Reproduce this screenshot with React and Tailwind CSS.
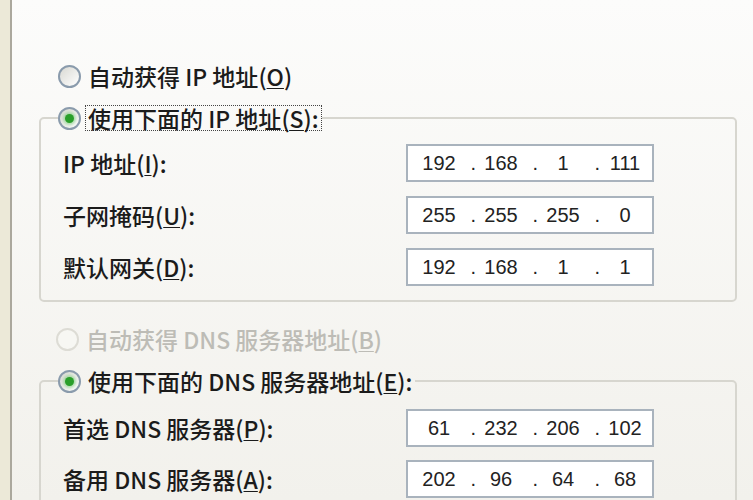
import { Fragment } from "react";
import clsx from "clsx";

const Radio = ({ checked, disabled }) => (
    <span
        className={clsx(
            "flex h-[23px] w-[23px] shrink-0 items-center justify-center rounded-full border-2",
            disabled
                ? "border-[#dddcd5] bg-[#f7f7f3]"
                : "border-[#8a9bac] bg-linear-to-br from-[#d9d9d3] to-[#ffffff]"
        )}
    >
        {checked && (
            <span className="h-[9px] w-[9px] rounded-full bg-[#2a9f2a] shadow-[0_0_3px_2px_rgba(110,200,110,0.55)]" />
        )}
    </span>
);

// label text with the access key underlined
const Label = ({ before, keyChar, after = "" }) => (
    <>
        {before}(<span className="underline decoration-1 underline-offset-2">{keyChar}</span>){after}
    </>
);

const RadioRow = ({ checked, disabled, focused, children }) => (
    <div className="flex h-[26px] items-center gap-[4px]">
        <Radio checked={checked} disabled={disabled} />
        <span
            className={clsx(
                "border px-[2px] leading-[24px] whitespace-pre",
                focused ? "border-dotted border-[#444]" : "border-transparent",
                disabled ? "text-[#bdbcb6]" : "text-[#1b1b1b]"
            )}
        >
            {children}
        </span>
    </div>
);

const IpBox = ({ parts }) => (
    <div className="flex h-[38px] w-[248px] shrink-0 items-center border-2 border-[#a9b3bd] bg-white pl-[6px] font-['Liberation_Sans',sans-serif] text-[20px] text-[#222]">
        {parts.map((p, i) => (
            <Fragment key={i}>
                {i > 0 && <span className="w-[12px] text-right">.</span>}
                <span className="w-[50px] text-center">{p}</span>
            </Fragment>
        ))}
    </div>
);

const FieldRow = ({ label, parts }) => (
    <div className="flex h-[38px] items-center">
        <span className="w-[343px] shrink-0 leading-[24px] whitespace-pre text-[#1b1b1b]">{label}</span>
        <IpBox parts={parts} />
    </div>
);

export default function App() {
    return (
        <div className="flex h-[500px] w-[753px] overflow-hidden bg-[#ece9d8] font-['Noto_Sans_CJK_SC',sans-serif] text-[23px] font-medium">
            <div className="w-[10px] shrink-0 bg-[#ece9d8]" />

            <div className="flex flex-1 flex-col border-l-2 border-[#aba89d] bg-linear-to-b from-[#fcfcfb] to-[#f2f1ec] pt-[63px] pl-[27px]">
                <div className="pl-[19px]">
                    <RadioRow>
                        <Label before="自动获得 IP 地址" keyChar="O" />
                    </RadioRow>
                </div>

                {/* IP group */}
                <fieldset className="mt-[16px] w-[698px] shrink-0 rounded-[5px] border-2 border-[#d7d6cf] pl-[17px] pb-[14px]">
                    <legend>
                        <RadioRow checked focused>
                            <Label before="使用下面的 IP 地址" keyChar="S" after=":" />
                        </RadioRow>
                    </legend>
                    <div className="mt-[13px] flex flex-col gap-[14px] pl-[5px]">
                        <FieldRow label={<Label before="IP 地址" keyChar="I" after=":" />} parts={["192", "168", "1", "111"]} />
                        <FieldRow label={<Label before="子网掩码" keyChar="U" after=":" />} parts={["255", "255", "255", "0"]} />
                        <FieldRow label={<Label before="默认网关" keyChar="D" after=":" />} parts={["192", "168", "1", "1"]} />
                    </div>
                </fieldset>

                <div className="mt-[24px] pl-[17px]">
                    <RadioRow disabled>
                        <Label before="自动获得 DNS 服务器地址" keyChar="B" />
                    </RadioRow>
                </div>

                {/* DNS group */}
                <fieldset className="mt-[16px] w-[698px] shrink-0 rounded-[5px] border-2 border-[#d7d6cf] pl-[17px] pb-[14px]">
                    <legend>
                        <RadioRow checked>
                            <Label before="使用下面的 DNS 服务器地址" keyChar="E" after=":" />
                        </RadioRow>
                    </legend>
                    <div className="mt-[15px] flex flex-col gap-[13px] pl-[5px]">
                        <FieldRow label={<Label before="首选 DNS 服务器" keyChar="P" after=":" />} parts={["61", "232", "206", "102"]} />
                        <FieldRow label={<Label before="备用 DNS 服务器" keyChar="A" after=":" />} parts={["202", "96", "64", "68"]} />
                    </div>
                </fieldset>
            </div>
        </div>
    );
}
